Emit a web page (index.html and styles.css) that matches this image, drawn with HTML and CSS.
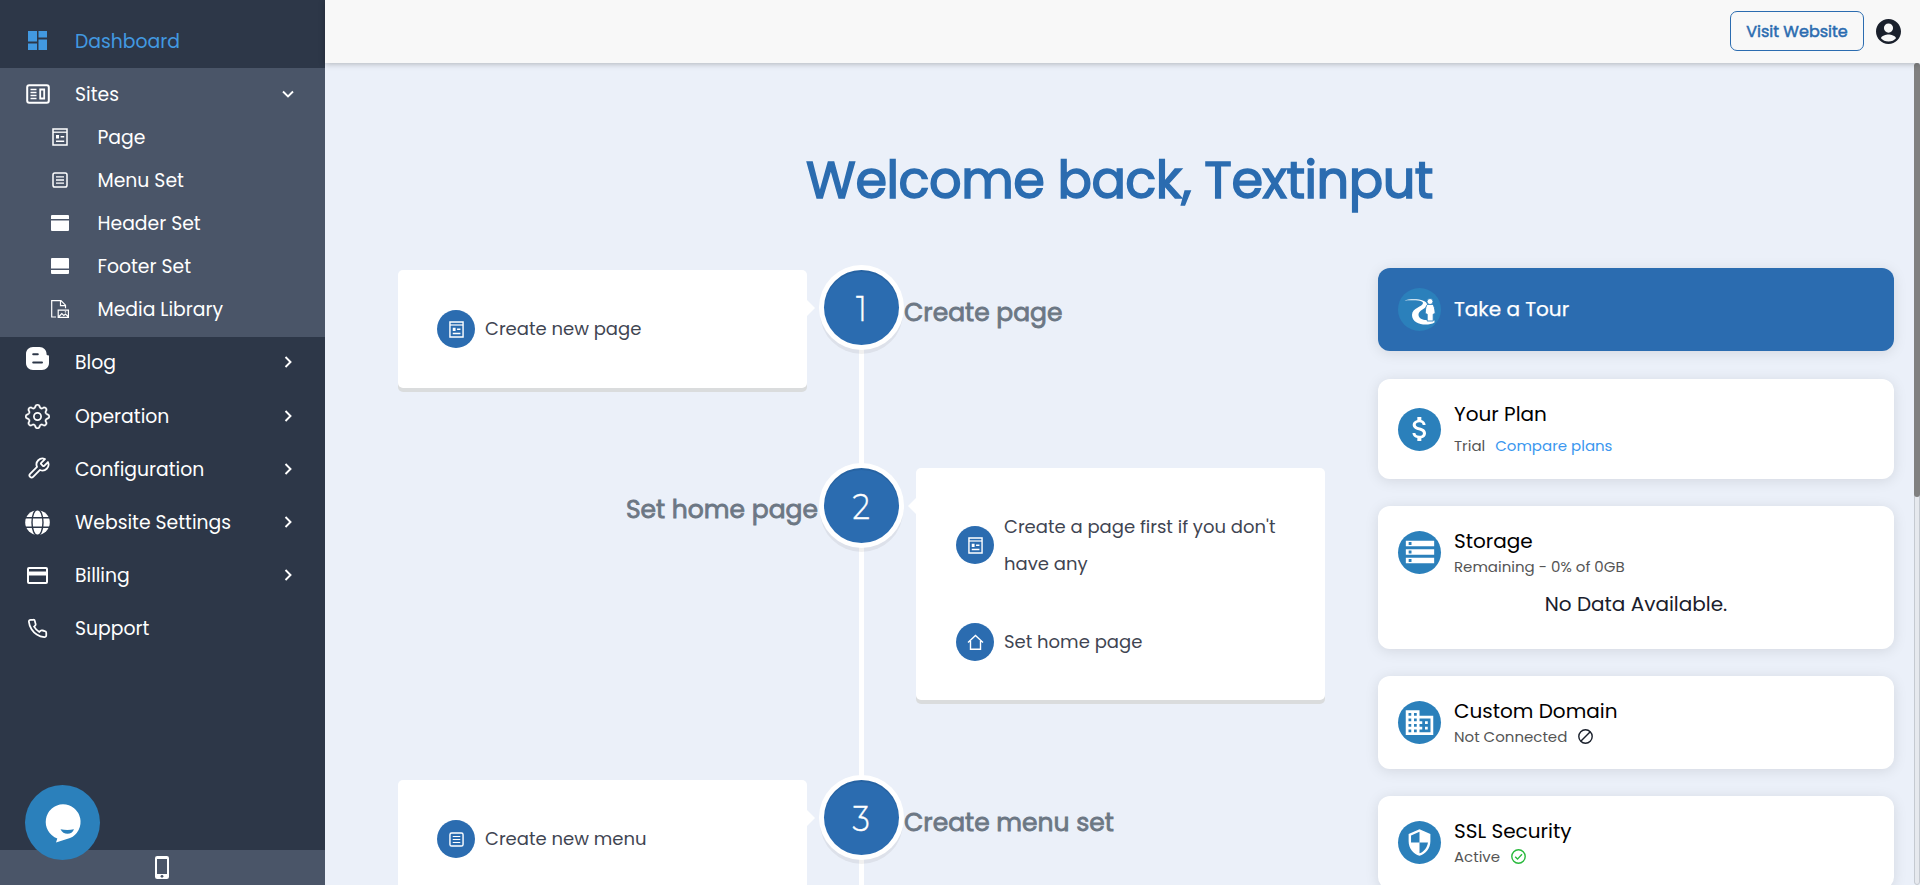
FILE: index.html
```html
<!DOCTYPE html>
<html lang="en">
<head>
<meta charset="utf-8">
<title>Dashboard</title>
<link rel="stylesheet" href="styles.css">
</head>
<body>
<svg class="sprite" aria-hidden="true">
  <symbol id="i-page" viewBox="0 0 16 18"><path d="M1 1h14v16H1z" fill="none" stroke="currentColor" stroke-width="1.5"/><path d="M1 4.2h14" stroke="currentColor" stroke-width="1.3"/><path d="M4 7h3v3.500H4zM8.600 8h3.600v1.500H8.600zM4 12.500h8.200v1.500H4z" fill="currentColor"/></symbol>
  <symbol id="i-menu" viewBox="0 0 16 16"><rect x="1" y="1" width="14" height="14" rx="1.800" fill="none" stroke="currentColor" stroke-width="1.500"/><path d="M4 4.800h8M4 8h8M4 11.200h8" stroke="currentColor" stroke-width="1.300"/></symbol>
  <symbol id="i-right" viewBox="0 0 12 12"><path d="M3.500 1l5 5-5 5" fill="none" stroke="currentColor" stroke-width="1.900"/></symbol>
</svg>
<div class="app">
  <aside class="sidebar">
    <nav class="nav">
      <a class="item dashboard"><span class="ico"><svg width="19" height="19" viewBox="0 0 19 19"><path d="M0 0h9v10.500H0zM10.500 0H19v6.500h-8.500zM0 12.500h9V19H0zM10.500 8.500H19V19h-8.500z" fill="currentColor"/></svg></span><span>Dashboard</span></a>
      <div class="group">
        <a class="item sites"><span class="ico"><svg width="24" height="20" viewBox="0 0 24 20"><rect x="1.200" y="1.200" width="21.600" height="17.600" rx="2" fill="none" stroke="currentColor" stroke-width="2"/><path d="M4.500 5.500h6M4.500 8.500h6M4.500 11.500h6M4.500 14.500h6" stroke="currentColor" stroke-width="1.300"/><path d="M14.200 5.500h4v9h-4z" fill="none" stroke="currentColor" stroke-width="1.800"/></svg></span><span>Sites</span><svg class="chev" width="12" height="12" viewBox="0 0 12 12"><path d="M1 3.500l5 5 5-5" fill="none" stroke="currentColor" stroke-width="1.900"/></svg></a>
        <a class="sub"><span class="ico"><svg width="16" height="18"><use href="#i-page"/></svg></span><span>Page</span></a>
        <a class="sub"><span class="ico"><svg width="16" height="16"><use href="#i-menu"/></svg></span><span>Menu Set</span></a>
        <a class="sub"><span class="ico"><svg width="18" height="16" viewBox="0 0 18 16"><path d="M0 1q0-1 1-1h16q1 0 1 1v3H0zM0 5.500h18V15q0 1-1 1H1q-1 0-1-1z" fill="currentColor"/></svg></span><span>Header Set</span></a>
        <a class="sub"><span class="ico"><svg width="18" height="16" viewBox="0 0 18 16"><path d="M0 12h18v3q0 1-1 1H1q-1 0-1-1zM0 10.500V1q0-1 1-1h16q1 0 1 1v9.500z" fill="currentColor"/></svg></span><span>Footer Set</span></a>
        <a class="sub"><span class="ico"><svg width="18" height="18" viewBox="0 0 18 18"><path d="M5 17H.700V.700H10l4.500 4.500v3M9.500 1v4.700h5" fill="none" stroke="currentColor" stroke-width="1.200"/><path d="M7.200 10.200h10.200v7.100H7.200zM8 16.500l2.800-3 2 2 1.700-1.500 2.600 2.700M13.800 11.800h1.400" fill="none" stroke="currentColor" stroke-width="1.200"/></svg></span><span>Media Library</span></a>
      </div>
      <a class="item first"><span class="ico blog"><svg width="23" height="23" viewBox="0 0 23 23"><path d="M7 0h6.500c4 0 7 3 7 6.500 0 1.500.500 1.800 1.300 1.800.900 0 1.200.500 1.200 1.300V16c0 4-3 7-7 7H7c-4 0-7-3-7-7V7c0-4 3-7 7-7z" fill="currentColor"/><path d="M7.200 7.300h4.600M7.200 15.500h8.800" stroke="#2d3748" stroke-width="2" stroke-linecap="round"/></svg></span><span>Blog</span><svg class="chev" width="12" height="12"><use href="#i-right"/></svg></a>
      <a class="item"><span class="ico"><svg width="25" height="25" viewBox="0 0 16 16"><circle cx="8" cy="8" r="2.300" fill="none" stroke="currentColor" stroke-width="1.100"/><path fill="currentColor" stroke="currentColor" stroke-width=".2" d="M9.796 1.343c-.527-1.790-3.065-1.790-3.592 0l-.094.319a.873.873 0 0 1-1.255.520l-.292-.160c-1.640-.892-3.433.902-2.540 2.541l.159.292a.873.873 0 0 1-.520 1.255l-.319.094c-1.790.527-1.790 3.065 0 3.592l.319.094a.873.873 0 0 1 .520 1.255l-.160.292c-.892 1.640.901 3.434 2.541 2.540l.292-.159a.873.873 0 0 1 1.255.520l.094.319c.527 1.790 3.065 1.790 3.592 0l.094-.319a.873.873 0 0 1 1.255-.520l.292.160c1.640.893 3.434-.902 2.540-2.541l-.159-.292a.873.873 0 0 1 .520-1.255l.319-.094c1.790-.527 1.790-3.065 0-3.592l-.319-.094a.873.873 0 0 1-.520-1.255l.160-.292c.893-1.640-.902-3.433-2.541-2.540l-.292.159a.873.873 0 0 1-1.255-.520l-.094-.319zm-2.633.283c.246-.835 1.428-.835 1.674 0l.094.319a1.873 1.873 0 0 0 2.693 1.115l.291-.160c.764-.415 1.600.420 1.184 1.185l-.159.292a1.873 1.873 0 0 0 1.116 2.692l.318.094c.835.246.835 1.428 0 1.674l-.319.094a1.873 1.873 0 0 0-1.115 2.693l.160.291c.415.764-.420 1.600-1.185 1.184l-.291-.159a1.873 1.873 0 0 0-2.693 1.116l-.094.318c-.246.835-1.428.835-1.674 0l-.094-.319a1.873 1.873 0 0 0-2.692-1.115l-.292.160c-.764.415-1.600-.420-1.184-1.185l.159-.291A1.873 1.873 0 0 0 1.945 8.930l-.319-.094c-.835-.246-.835-1.428 0-1.674l.319-.094A1.873 1.873 0 0 0 3.060 4.377l-.160-.292c-.415-.764.420-1.600 1.185-1.184l.292.159a1.873 1.873 0 0 0 2.692-1.115l.094-.319z"/></svg></span><span>Operation</span><svg class="chev" width="12" height="12"><use href="#i-right"/></svg></a>
      <a class="item"><span class="ico"><svg width="24" height="24" viewBox="0 0 24 24"><path transform="translate(.5 -.5)" d="M14.700 6.300a1 1 0 0 0 0 1.400l1.600 1.600a1 1 0 0 0 1.400 0l3.770-3.770a6 6 0 0 1-7.940 7.940l-6.910 6.910a2.120 2.120 0 0 1-3-3l6.910-6.910a6 6 0 0 1 7.940-7.940l-3.760 3.760z" fill="none" stroke="currentColor" stroke-width="1.800" stroke-linejoin="round"/></svg></span><span>Configuration</span><svg class="chev" width="12" height="12"><use href="#i-right"/></svg></a>
      <a class="item"><span class="ico"><svg width="25" height="25" viewBox="0 0 25 25"><circle cx="12.500" cy="12.500" r="12.300" fill="currentColor"/><path d="M0 7.700h25M0 17.300h25" stroke="#2d3748" stroke-width="1.400"/><ellipse cx="12.500" cy="12.500" rx="5.500" ry="13" fill="none" stroke="#2d3748" stroke-width="1.400"/></svg></span><span>Website Settings</span><svg class="chev" width="12" height="12"><use href="#i-right"/></svg></a>
      <a class="item"><span class="ico"><svg width="21" height="17" viewBox="0 0 21 17"><rect x="1" y="1" width="19" height="15" rx="1" fill="none" stroke="currentColor" stroke-width="2"/><path d="M1 6.500h19" stroke="currentColor" stroke-width="4"/></svg></span><span>Billing</span><svg class="chev" width="12" height="12"><use href="#i-right"/></svg></a>
      <a class="item"><span class="ico"><svg width="21" height="21" viewBox="0 0 24 24"><path d="M22 16.920v3a2 2 0 0 1-2.180 2 19.790 19.790 0 0 1-8.630-3.070 19.500 19.500 0 0 1-6-6 19.790 19.790 0 0 1-3.070-8.670A2 2 0 0 1 4.110 2h3a2 2 0 0 1 2 1.720 12.840 12.840 0 0 0 .700 2.810 2 2 0 0 1-.450 2.110L8.090 9.910a16 16 0 0 0 6 6l1.270-1.270a2 2 0 0 1 2.110-.450 12.840 12.840 0 0 0 2.810.700A2 2 0 0 1 22 16.920z" fill="none" stroke="currentColor" stroke-width="2"/></svg></span><span>Support</span></a>
    </nav>
    <div class="device-bar"><svg width="14" height="23" viewBox="0 0 14 23"><rect width="14" height="23" rx="2.200" fill="currentColor"/><path d="M2 3h10v15H2z" fill="#4a5568"/><circle cx="7" cy="20.300" r="1.400" fill="#4a5568"/></svg></div>
    <button class="chat" aria-label="Chat"><svg width="75" height="75" viewBox="0 0 75 75"><path d="M38 19.200a17.700 17.700 0 0 1 7 33.900L31 57.500l1.300-4A17.700 17.700 0 0 1 38 19.200z" fill="#fff"/><path d="M35.500 44.200q7 1.500 13.500 0-1.800 4.500-6.500 4.500t-7-4.500z" fill="#2b80bb"/></svg></button>
  </aside>
  <div class="main">
    <header class="topbar">
      <a class="visit">Visit Website</a>
      <svg width="25" height="25" viewBox="2 2 20 20"><path fill="#1a202c" fill-rule="evenodd" d="M12 2C6.480 2 2 6.480 2 12s4.480 10 10 10 10-4.480 10-10S17.520 2 12 2zm0 3.600a3.600 3.600 0 1 1 0 7.300 3.600 3.600 0 0 1 0-7.300zM12 20c-2.500 0-4.700-1-6-2.600.4-2 4-3 6-3s5.600 1 6 3C16.700 19 14.500 20 12 20z"/></svg>
    </header>
    <div class="content">
      <h1>Welcome back, Textinput</h1>
      <div class="cols">
        <section class="timeline">
          <div class="step s1">
            <div class="card left"><div class="task"><span class="dot"><svg width="15" height="17"><use href="#i-page"/></svg></span><span class="one">Create new page</span></div></div>
            <div class="num"><span>1</span></div>
            <h2>Create page</h2>
          </div>
          <div class="step s2">
            <h2>Set home page</h2>
            <div class="num"><span>2</span></div>
            <div class="card right">
              <div class="task"><span class="dot"><svg width="15" height="17"><use href="#i-page"/></svg></span><span>Create a page first if you don't<br>have any</span></div>
              <div class="task"><span class="dot"><svg width="17" height="17" viewBox="0 0 17 17"><path d="M1 8.500L8.500 1.500 16 8.500M3.500 7v8.200h10V7" fill="none" stroke="currentColor" stroke-width="1.400"/></svg></span><span class="one">Set home page</span></div>
            </div>
          </div>
          <div class="step s3">
            <div class="card left"><div class="task"><span class="dot"><svg width="15" height="15"><use href="#i-menu"/></svg></span><span class="one">Create new menu</span></div></div>
            <div class="num"><span>3</span></div>
            <h2>Create menu set</h2>
          </div>
        </section>
        <section class="side">
          <a class="panel tour"><span class="badge"><svg width="43" height="43" viewBox="0 0 43 43"><path d="M6 12.500c8-2.500 24-1.500 23 4.500-.6 4-8.500 5-8.500 9.500 0 4 4 5.500 8 5.500l8 .5v2c-7 4-22.500 2.500-22.500-7.500 0-7.500 11-8 11-12 0-2.600-8-3-19-2.500z" fill="#fff"/><g fill="#fff" stroke="#2b80bb" stroke-width=".9"><path d="M29.500 16.500h5q2.200 1 2.700 9l-2 .7V33h-6v-6.800l-2-.7q.3-8 2.300-9z"/><circle cx="32" cy="13.500" r="3"/></g></svg></span><b>Take a Tour</b></a>
          <div class="panel plan"><span class="badge"><svg width="32" height="34" viewBox="0 0 24 24"><path fill="#fff" d="M11.800 10.900c-2.270-.590-3-1.200-3-2.150 0-1.090 1.010-1.850 2.700-1.850 1.780 0 2.440.850 2.500 2.100h2.210c-.070-1.720-1.120-3.300-3.210-3.810V3h-3v2.160c-1.940.420-3.500 1.680-3.500 3.610 0 2.310 1.910 3.460 4.700 4.130 2.500.600 3 1.480 3 2.410 0 .690-.490 1.790-2.700 1.790-2.060 0-2.870-.920-2.980-2.100h-2.200c.120 2.190 1.760 3.420 3.680 3.830V21h3v-2.150c1.950-.370 3.500-1.500 3.500-3.550 0-2.840-2.430-3.810-4.700-4.400z"/></svg></span><div class="info"><b>Your Plan</b><p><span>Trial</span><a class="link">Compare plans</a></p></div></div>
          <div class="panel storage"><div class="row"><span class="badge"><svg width="34" height="34" viewBox="0 0 24 24"><path fill="#fff" d="M2 20h20v-4H2v4zm2-3h2v2H4v-2zM2 4v4h20V4H2zm4 3H4V5h2v2zm-4 7h20v-4H2v4zm2-3h2v2H4v-2z"/></svg></span><div class="info"><b>Storage</b><p>Remaining - 0% of 0GB</p></div></div><div class="empty">No Data Available.</div></div>
          <div class="panel"><span class="badge"><svg width="33" height="33" viewBox="0 0 24 24"><path fill="#fff" d="M12 7V3H2v18h20V7H12zM6 19H4v-2h2v2zm0-4H4v-2h2v2zm0-4H4V9h2v2zm0-4H4V5h2v2zm4 12H8v-2h2v2zm0-4H8v-2h2v2zm0-4H8V9h2v2zm0-4H8V5h2v2zm10 12h-8v-2h2v-2h-2v-2h2v-2h-2V9h8v10zm-2-8h-2v2h2v-2zm0 4h-2v2h2v-2z"/></svg></span><div class="info"><b>Custom Domain</b><p><span>Not Connected</span><svg width="15" height="15" viewBox="0 0 15 15"><circle cx="7.500" cy="7.500" r="6.700" fill="none" stroke="#1a202c" stroke-width="1.400"/><path d="M3 12l9-9" stroke="#1a202c" stroke-width="1.400"/></svg></p></div></div>
          <div class="panel"><span class="badge"><svg width="29" height="29" viewBox="0 0 24 24"><path fill="#fff" d="M12 1L3 5v6c0 5.550 3.840 10.740 9 12 5.160-1.260 9-6.450 9-12V5l-9-4zm0 10.990h7c-.530 4.120-3.280 7.790-7 8.940V12H5V6.300l7-3.110v8.800z"/></svg></span><div class="info"><b>SSL Security</b><p><span>Active</span><svg width="15" height="15" viewBox="0 0 15 15"><circle cx="7.500" cy="7.500" r="6.700" fill="none" stroke="#28b93c" stroke-width="1.400"/><path d="M4.200 7.800l2.300 2.300L11 5.200" fill="none" stroke="#28b93c" stroke-width="1.400"/></svg></p></div></div>
        </section>
      </div>
      <div class="scroll"><div class="thumb"></div></div>
    </div>
  </div>
</div>
</body>
</html>
```
FILE: styles.css
```css
* { box-sizing: border-box; }
body { margin: 0; font-family: Poppins, Inter, "Open Sans", sans-serif; color: #1a202c; overflow: hidden; }
h1, h2, p { margin: 0; font-weight: 400; }
svg { display: block; flex: none; }
.sprite { display: none; }
.app { display: flex; width: 1920px; height: 885px; overflow: hidden; }

/* Sidebar */
.sidebar { position: relative; display: flex; flex-direction: column; width: 325px; flex: none; background: #2d3748; color: #fff; font-size: 18.8px; }
.nav { flex: 1; }
.item { display: flex; align-items: center; height: 53px; padding: 0 31px 0 25px; }
.item .ico { display: flex; justify-content: center; width: 25px; margin: -1px 25px 0 0; }
.item .chev { margin: -1px 0 0 auto; }
.first { padding-bottom: 2px; }
.item .blog { margin-bottom: 7px; }
.dashboard { height: 68px; padding-top: 14px; color: #4299e1; }
.group { height: 269px; background: #4a5568; }
.sites { height: 48px; padding-top: 4px; }
.sub { display: flex; align-items: center; height: 43px; padding: 0 0 1px 51px; }
.sub .ico { display: flex; justify-content: center; width: 18px; margin-right: 28.5px; }
.device-bar { display: flex; align-items: center; justify-content: center; height: 35px; padding-right: 1px; background: #4a5568; }
.chat { position: absolute; left: 25px; bottom: 25px; width: 75px; height: 75px; padding: 0; border: 0; border-radius: 50%; background: #2b80bb; }

/* Top bar */
.main { display: flex; flex-direction: column; flex: 1; min-width: 0; }
.topbar { display: flex; align-items: center; justify-content: flex-end; gap: 12px; height: 63px; flex: none; padding: 0 19px 1px 0; background: #f8f8f8; box-shadow: 0 1px 6px rgba(0, 0, 0, .25); z-index: 1; }
.visit { display: flex; align-items: center; justify-content: center; width: 134px; height: 40px; border: 1px solid #2b6cb0; border-radius: 7px; color: #2b6cb0; font-size: 16px; -webkit-text-stroke: .5px #2b6cb0; }

.content { position: relative; flex: 1; background: #ebf0f9; overflow: hidden; }
h1 { padding: 85px 6px 0 0; height: 205px; text-align: center; color: #2b6cb0; font-size: 51px; line-height: 64px; letter-spacing: -.5px; -webkit-text-stroke: 1.5px #2b6cb0; }
.cols { display: flex; justify-content: space-between; padding: 0 26px 0 73px; }

/* Onboarding timeline */
.timeline { position: relative; width: 927px; padding-top: 2px; }
.timeline::before { content: ""; position: absolute; left: 461px; top: 6px; width: 5px; height: 640px; background: #fff; }
.step { position: relative; display: grid; grid-template-columns: 409px 109px 409px; align-items: start; justify-items: center; }
.s1 { height: 198px; }
.s2 { height: 312px; }
.card { position: relative; width: 100%; padding: 40px; border-radius: 5px; background: #fff; box-shadow: 0 4px 0 #dadcdd; font-size: 18px; }
.card::after { content: ""; position: absolute; top: 30px; border: 8px solid transparent; }
.left::after { left: 100%; border-left-color: #fff; }
.right::after { right: 100%; border-right-color: #fff; }
.task { display: flex; align-items: center; gap: 10px; min-height: 38px; color: #3f4552; line-height: 37px; }
.task .one { padding-bottom: 1px; }
.right { height: 232px; }
.right .task + .task { margin-top: 41px; }
.dot { display: flex; align-items: center; justify-content: center; width: 38px; height: 38px; flex: none; border-radius: 50%; background: #2b6cb0; color: #fff; }
.left .task { margin-left: -1px; }
.num { display: flex; align-items: center; justify-content: center; width: 75px; height: 75px; border-radius: 50%; background: #2b6cb0; color: #fff; font-family: Montserrat, Poppins, Lato, sans-serif; font-size: 36px; font-weight: 300; box-shadow: 0 0 0 5px #fff, 0 5px 0 4px rgba(0, 0, 0, .06), inset 0 2px 0 rgba(0, 0, 0, .08); }
.num span { transform: scaleX(.86); -webkit-text-stroke: .4px #fff; }
h2 { justify-self: start; margin: 27px 0 0 -12px; color: #6c7784; font-size: 25px; line-height: 32px; -webkit-text-stroke: .8px #6c7784; }
.s2 h2 { justify-self: end; margin: 26px -11px 0 0; }

/* Status panels */
.side { display: flex; flex-direction: column; gap: 27px; width: 516px; }
.panel { display: flex; align-items: center; height: 93px; padding-left: 20px; border-radius: 12px; background: #fff; box-shadow: 0 2px 14px rgba(0, 0, 0, .1); }
.panel b { display: block; color: #000; font-size: 20px; line-height: 24px; font-weight: 400; }
.panel p { display: flex; align-items: center; gap: 11px; height: 27px; color: #555; font-size: 15px; }
.info { padding-top: 4px; }
.badge { display: flex; align-items: center; justify-content: center; width: 43px; height: 43px; flex: none; margin-right: 13px; border-radius: 50%; background: #2b80bb; }
.tour { height: 83px; margin-bottom: 1px; background: #2b6cb0; }
.tour b { padding-bottom: 2px; color: #fff; -webkit-text-stroke: .25px #fff; }
.plan { height: 100px; }
.plan .info { padding-top: 2px; }
.plan b { padding-bottom: 6px; }
.link { margin-left: -1px; color: #3b97ef; }
.storage { display: block; height: 143px; padding-top: 20px; }
.row { display: flex; align-items: center; height: 52px; }
.empty { padding-right: 20px; text-align: center; font-size: 20px; line-height: 53px; }

/* Scrollbar */
.scroll { position: absolute; right: 0; top: 0; width: 6px; height: 822px; border: 1px solid #c5cad1; background: #e6e9ee; border-radius: 3px; }
.thumb { width: 6px; height: 434px; margin: -1px; background: #808080; border-radius: 3px; }
```
